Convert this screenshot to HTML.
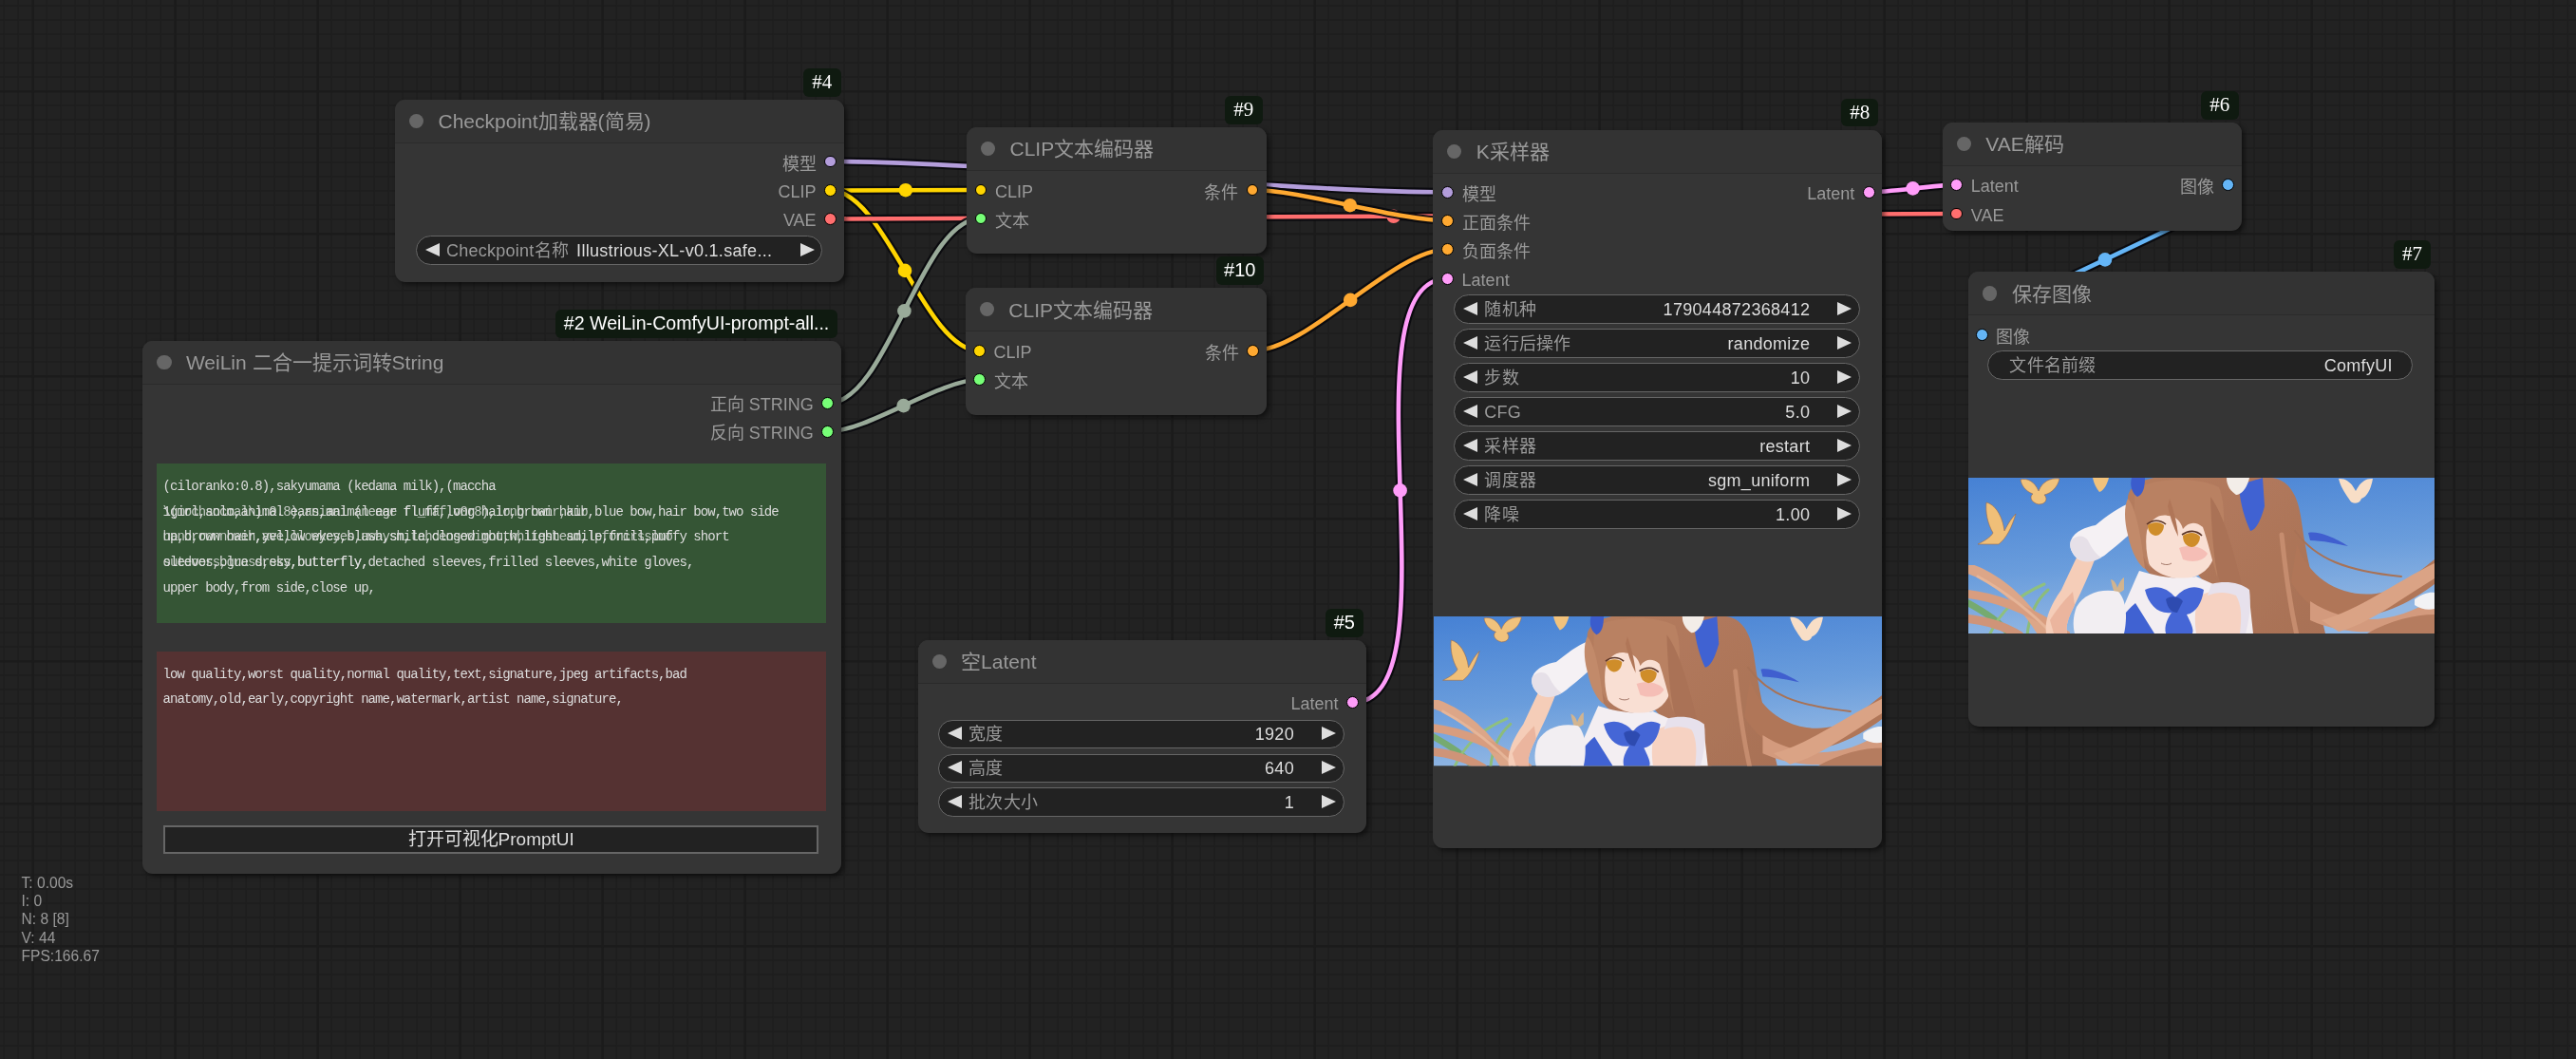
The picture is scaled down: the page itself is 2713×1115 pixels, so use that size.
<!DOCTYPE html>
<html lang="zh-CN"><head><meta charset="utf-8"><title>ComfyUI</title><style>
*{margin:0;padding:0;box-sizing:border-box}
html,body{width:2713px;height:1115px;overflow:hidden;background:#222;font-family:"Liberation Sans",sans-serif;-webkit-font-smoothing:antialiased}
.bg,.links{position:absolute;left:0;top:0}
#ui{position:absolute;left:0;top:0;width:2713px;height:1115px;will-change:transform}
.node{position:absolute;background:#353535;border-radius:11px;box-shadow:3px 3px 5px rgba(0,0,0,0.5)}
.node::before{content:"";position:absolute;left:0;top:0;right:0;height:45px;background:#333;border-radius:11px 11px 0 0}
.tdiv{position:absolute;left:0;right:0;top:44.5px;height:1.5px;background:#2b2b2b}
.tdot{position:absolute;left:15px;top:15px;width:15.2px;height:15.2px;border-radius:50%;background:#666}
.title{position:absolute;left:45.5px;top:0.4px;height:45px;line-height:45px;font-size:21px;color:#999;white-space:nowrap}
.slot{position:absolute;width:12.8px;height:12.8px;border-radius:50%;border:1.5px solid #000}
.slabel{position:absolute;height:30px;line-height:30px;font-size:18px;color:#999;white-space:nowrap}
.wg{position:absolute;background:#222;border:1.6px solid #666;border-radius:16px}
.arl{position:absolute;left:8.5px;top:6.8px;width:0;height:0;border-top:7.5px solid transparent;border-bottom:7.5px solid transparent;border-right:15px solid #ddd}
.arr{position:absolute;right:7.5px;top:6.8px;width:0;height:0;border-top:7.5px solid transparent;border-bottom:7.5px solid transparent;border-left:15px solid #ddd}
.wl{position:absolute;top:1.5px;line-height:27.3px;font-size:18px;color:#999;white-space:nowrap;letter-spacing:0.25px}
.wv{position:absolute;top:1.5px;line-height:27.3px;font-size:18px;color:#ddd;white-space:nowrap;letter-spacing:0.3px;margin-right:-0.3px}
.badge{position:absolute;will-change:transform;background:#0f1a10;border-radius:6px;color:#fff;font-size:20px;line-height:28.2px;text-align:center;white-space:nowrap}
.badge.long{font-size:19.6px;line-height:28.5px}
.badge.num{font-family:"Liberation Serif",serif;font-size:21px;line-height:28.5px}
.ta{position:absolute;overflow:hidden}
.tl{position:absolute;left:6.5px;height:26px;line-height:26px;font-family:"Liberation Mono",monospace;font-size:14px;letter-spacing:-0.95px;color:#ddd;white-space:pre}
.btn{position:absolute;background:#222;border:2px solid #666;color:#ddd;font-size:19px;line-height:26px;text-align:center}
.img{position:absolute}
.stats{position:absolute;left:22.5px;top:919.5px;font-size:15.6px;line-height:19.35px;color:#999}
</style></head>
<body>
<svg width="0" height="0" style="position:absolute"><defs><symbol id="art" viewBox="0 0 491 164">
<linearGradient id="sky" x1="0" y1="0" x2="0.25" y2="1"><stop offset="0" stop-color="#4681d4"/><stop offset="0.6" stop-color="#6a9ddc"/><stop offset="1" stop-color="#92b7e3"/></linearGradient>
<linearGradient id="hairg" x1="0" y1="0" x2="1" y2="1"><stop offset="0" stop-color="#b57c5e"/><stop offset="1" stop-color="#a87156"/></linearGradient>
<filter id="bl" x="-2%" y="-2%" width="104%" height="104%"><feGaussianBlur stdDeviation="0.6"/></filter>
<rect width="491" height="164" fill="url(#sky)"/>
<g filter="url(#bl)" fill="none" stroke-linecap="round">
<!-- grass left -->
<path d="M0 132 C18 142 34 152 44 166" stroke="#76aa70" stroke-width="7"/>
<path d="M22 166 C34 140 52 124 80 112" stroke="#8fc07e" stroke-width="3"/>
<path d="M62 166 C64 146 70 130 84 118" stroke="#8cbc7a" stroke-width="3"/>
<!-- hair strands lower left -->
<path d="M-4 94 C28 104 58 128 80 166" stroke="#dca688" stroke-width="11"/>
<path d="M-4 122 C34 126 70 142 104 166" stroke="#d89d7f" stroke-width="9"/>
<path d="M-4 148 C18 150 38 156 54 166" stroke="#cf9478" stroke-width="9"/>
<path d="M10 104 C40 120 70 145 90 166" stroke="#e6b598" stroke-width="3"/>
</g>
<g filter="url(#bl)">
<!-- butterflies left -->
<path d="M55 2 C62 0 70 4 74 14 C78 4 86 0 96 1 C94 10 88 16 80 18 C84 22 82 28 74 28 C66 26 64 20 68 17 C60 14 56 8 55 2Z" fill="#f1c27c" stroke="#9a6a4a" stroke-width="0.6"/>
<path d="M19 26 C28 28 36 40 38 56 C42 48 46 42 50 38 C46 52 40 64 32 70 L10 70 C18 66 24 62 26 58 C20 48 18 36 19 26Z" fill="#f0bf78" stroke="#9a6a4a" stroke-width="0.6"/>
<path d="M131 0 L148 0 C146 8 142 14 138 15 C134 10 132 5 131 0Z" fill="#f1c27c"/>
<path d="M150 107 C154 108 156 112 157 116 C159 110 162 106 164 105 L164 118 C160 121 156 123 154 122 C152 116 151 112 150 107Z" fill="#e8b87c" opacity="0.8"/>
<!-- arm -->
<path d="M82 164 C80 150 86 135 98 118 C104 105 110 92 116 80 L134 84 C128 100 120 118 112 134 C106 146 102 156 104 164Z" fill="#f5cdb8"/>
<path d="M86 150 C92 140 100 130 110 120 L112 134 C106 146 102 156 104 164 L90 164Z" fill="#ebb59e"/>
<!-- glove -->
<path d="M108 66 C112 56 124 52 134 50 C146 40 160 30 172 26 L182 48 C170 60 158 70 148 78 C140 86 128 90 116 86 C108 80 106 72 108 66Z" fill="#f5f1f4"/>
<path d="M108 66 C114 60 122 60 126 66 C130 74 134 80 140 84 C130 90 120 90 114 84 C108 78 106 72 108 66Z" fill="#e6e0e8"/>
<!-- hair main mass behind head -->
<path d="M168 20 C170 6 190 -4 230 -2 L320 0 C336 2 346 16 350 40 C354 70 360 100 368 130 L376 164 L270 164 C262 130 250 110 240 100 C220 110 200 110 190 100 C178 88 170 60 168 40Z" fill="url(#hairg)"/>
</g>
<g filter="url(#bl)" fill="none" stroke-linecap="round">
<!-- ponytail sweeping strands -->
<path d="M344 56 C366 86 398 98 456 104" stroke="#a87256" stroke-width="2"/>
<path d="M330 60 C334 100 338 130 346 166" stroke="#c58c6e" stroke-width="5"/>
</g>
<g filter="url(#bl)">
<path d="M346 70 C360 110 400 130 440 120 C460 112 478 96 491 86 L491 112 C470 128 440 146 400 148 C370 146 352 130 340 110Z" fill="#b07658"/>
<path d="M360 130 C400 156 450 156 491 126 L491 146 C450 166 400 168 360 150Z" fill="#d39a7d"/>
<path d="M372 150 C410 140 450 110 491 90 L491 106 C455 128 420 155 390 162Z" fill="#daa385"/>
<path d="M420 164 C445 150 470 144 491 144 L491 164Z" fill="#b57b5e"/>
<path d="M470 128 C478 122 486 120 491 121 L491 138 C484 140 476 138 470 134Z" fill="#f2f2f4"/>
<!-- face -->
<path d="M183 50 C190 40 205 36 238 40 C252 46 259 58 259 80 C257 94 246 104 228 107 C208 106 193 98 187 86 C182 74 181 62 183 50Z" fill="#f9dfd3"/>
<path d="M222 74 C232 70 246 72 252 80 C248 88 236 90 226 86Z" fill="#f4b8b0" opacity="0.85"/>
<!-- bangs over face -->
<path d="M176 12 C196 0 240 -2 264 10 C272 30 270 60 262 104 C256 84 252 66 247 52 C240 46 232 46 226 54 C224 46 218 40 210 40 C200 38 192 44 188 56 C186 70 188 84 192 96 C180 80 172 50 176 12Z" fill="#b98162"/>
<path d="M212 22 C216 34 220 48 221 62 C216 52 212 40 210 30Z" fill="#b07658"/>
<!-- eyes -->
<path d="M189 50 C194 46 202 46 206 50 C206 56 202 61 197 61 C192 60 189 56 189 50Z" fill="#cf8d2c"/>
<path d="M188 49 C194 44 202 44 208 49" stroke="#5a3426" stroke-width="1.6" fill="none"/>
<path d="M226 61 C232 57 240 57 244 62 C244 68 240 73 235 73 C229 72 226 68 226 61Z" fill="#cf8d2c"/>
<path d="M225 60 C232 55 240 55 246 61" stroke="#5a3426" stroke-width="1.6" fill="none"/>
<path d="M203 90 C207 92 211 92 214 90" stroke="#8a5a4a" stroke-width="0.8" fill="none"/>
<!-- hair left of face -->
<path d="M168 22 C176 30 182 60 186 96 C180 92 172 80 168 60 C164 45 164 30 168 22Z" fill="#c28a6a"/>
<!-- right lock over shoulder -->
<path d="M255 20 C270 40 280 80 290 120 C296 140 300 155 304 164 L284 164 C276 140 268 120 262 100 C258 80 256 50 255 20Z" fill="#aa7256"/>
<!-- ribbons -->
<path d="M285 8 C295 4 305 2 310 0 L312 30 C308 45 303 55 297 56 C292 45 286 28 285 8Z" fill="#3f62d2"/>
<path d="M172 0 L186 0 C186 10 184 18 178 20 C172 16 170 8 172 0Z" fill="#3a5ccc"/>
<path d="M272 0 L296 0 C294 10 288 18 282 18 C276 14 272 8 272 0Z" fill="#f3ede8"/>
<path d="M358 58 C368 56 384 62 400 72 C390 70 372 66 360 66Z" fill="#3f5fcf"/>
<path d="M390 1 C398 0 404 6 408 14 C412 6 418 0 426 1 C424 12 420 20 414 22 C412 28 404 28 402 24 C398 18 392 10 390 1Z" fill="#f8dec6"/>
<!-- dress / neck -->
<path d="M180 98 C200 104 220 108 240 104 L258 112 C270 112 285 112 295 118 L300 164 L150 164 C160 145 170 120 180 98Z" fill="#f3eef2"/>
<path d="M150 164 C158 152 166 140 176 132 L196 164Z" fill="#3f62d2"/>
<!-- shoulder -->
<path d="M244 124 C256 118 272 116 284 122 C290 136 290 150 288 164 L240 164 C238 150 238 136 244 124Z" fill="#f6d2c2"/>
<path d="M256 112 C270 108 286 110 296 118 C298 132 296 150 292 164 L286 164 C288 148 288 134 282 124 C272 120 262 120 252 124Z" fill="#e7e1ec"/>
<!-- bow -->
<path d="M186 118 C198 112 210 116 218 126 C226 116 238 112 248 118 C246 132 240 142 230 144 C234 152 238 160 236 164 L208 164 C206 156 210 148 214 142 C200 144 190 134 186 118Z" fill="#4566d6"/>
<path d="M208 128 C212 124 222 124 226 130 L220 142 C214 142 210 138 208 128Z" fill="#2f4bb0"/>
<!-- puff sleeve -->
<path d="M114 136 C122 122 140 116 158 120 C166 128 168 146 164 164 L112 164 C110 156 110 146 114 136Z" fill="#f2eef2"/>
</g>
</symbol>
</defs></svg>
<svg class="bg" width="2713" height="1115" viewBox="0 0 2713 1115"><rect width="100%" height="100%" fill="#222"/><path d="M4.1 0V1115M19.1 0V1115M34.1 0V1115M49.1 0V1115M64.1 0V1115M79.1 0V1115M94.1 0V1115M109.1 0V1115M124.1 0V1115M139.1 0V1115M154.1 0V1115M169.1 0V1115M184.1 0V1115M199.1 0V1115M214.1 0V1115M229.1 0V1115M244.1 0V1115M259.1 0V1115M274.1 0V1115M289.1 0V1115M304.1 0V1115M319.1 0V1115M334.1 0V1115M349.1 0V1115M364.1 0V1115M379.1 0V1115M394.1 0V1115M409.1 0V1115M424.1 0V1115M439.1 0V1115M454.1 0V1115M469.1 0V1115M484.1 0V1115M499.1 0V1115M514.1 0V1115M529.1 0V1115M544.1 0V1115M559.1 0V1115M574.1 0V1115M589.1 0V1115M604.1 0V1115M619.1 0V1115M634.1 0V1115M649.1 0V1115M664.1 0V1115M679.1 0V1115M694.1 0V1115M709.1 0V1115M724.1 0V1115M739.1 0V1115M754.1 0V1115M769.1 0V1115M784.1 0V1115M799.1 0V1115M814.1 0V1115M829.1 0V1115M844.1 0V1115M859.1 0V1115M874.1 0V1115M889.1 0V1115M904.1 0V1115M919.1 0V1115M934.1 0V1115M949.1 0V1115M964.1 0V1115M979.1 0V1115M994.1 0V1115M1009.1 0V1115M1024.1 0V1115M1039.1 0V1115M1054.1 0V1115M1069.1 0V1115M1084.1 0V1115M1099.1 0V1115M1114.1 0V1115M1129.1 0V1115M1144.1 0V1115M1159.1 0V1115M1174.1 0V1115M1189.1 0V1115M1204.1 0V1115M1219.1 0V1115M1234.1 0V1115M1249.1 0V1115M1264.1 0V1115M1279.1 0V1115M1294.1 0V1115M1309.1 0V1115M1324.1 0V1115M1339.1 0V1115M1354.1 0V1115M1369.1 0V1115M1384.1 0V1115M1399.1 0V1115M1414.1 0V1115M1429.1 0V1115M1444.1 0V1115M1459.1 0V1115M1474.1 0V1115M1489.1 0V1115M1504.1 0V1115M1519.1 0V1115M1534.1 0V1115M1549.1 0V1115M1564.1 0V1115M1579.1 0V1115M1594.1 0V1115M1609.1 0V1115M1624.1 0V1115M1639.1 0V1115M1654.1 0V1115M1669.1 0V1115M1684.1 0V1115M1699.1 0V1115M1714.1 0V1115M1729.1 0V1115M1744.1 0V1115M1759.1 0V1115M1774.1 0V1115M1789.1 0V1115M1804.1 0V1115M1819.1 0V1115M1834.1 0V1115M1849.1 0V1115M1864.1 0V1115M1879.1 0V1115M1894.1 0V1115M1909.1 0V1115M1924.1 0V1115M1939.1 0V1115M1954.1 0V1115M1969.1 0V1115M1984.1 0V1115M1999.1 0V1115M2014.1 0V1115M2029.1 0V1115M2044.1 0V1115M2059.1 0V1115M2074.1 0V1115M2089.1 0V1115M2104.1 0V1115M2119.1 0V1115M2134.1 0V1115M2149.1 0V1115M2164.1 0V1115M2179.1 0V1115M2194.1 0V1115M2209.1 0V1115M2224.1 0V1115M2239.1 0V1115M2254.1 0V1115M2269.1 0V1115M2284.1 0V1115M2299.1 0V1115M2314.1 0V1115M2329.1 0V1115M2344.1 0V1115M2359.1 0V1115M2374.1 0V1115M2389.1 0V1115M2404.1 0V1115M2419.1 0V1115M2434.1 0V1115M2449.1 0V1115M2464.1 0V1115M2479.1 0V1115M2494.1 0V1115M2509.1 0V1115M2524.1 0V1115M2539.1 0V1115M2554.1 0V1115M2569.1 0V1115M2584.1 0V1115M2599.1 0V1115M2614.1 0V1115M2629.1 0V1115M2644.1 0V1115M2659.1 0V1115M2674.1 0V1115M2689.1 0V1115M2704.1 0V1115M0 6.0H2713M0 21.0H2713M0 36.0H2713M0 51.0H2713M0 66.0H2713M0 81.0H2713M0 96.0H2713M0 111.0H2713M0 126.0H2713M0 141.0H2713M0 156.0H2713M0 171.0H2713M0 186.0H2713M0 201.0H2713M0 216.0H2713M0 231.0H2713M0 246.0H2713M0 261.0H2713M0 276.0H2713M0 291.0H2713M0 306.0H2713M0 321.0H2713M0 336.0H2713M0 351.0H2713M0 366.0H2713M0 381.0H2713M0 396.0H2713M0 411.0H2713M0 426.0H2713M0 441.0H2713M0 456.0H2713M0 471.0H2713M0 486.0H2713M0 501.0H2713M0 516.0H2713M0 531.0H2713M0 546.0H2713M0 561.0H2713M0 576.0H2713M0 591.0H2713M0 606.0H2713M0 621.0H2713M0 636.0H2713M0 651.0H2713M0 666.0H2713M0 681.0H2713M0 696.0H2713M0 711.0H2713M0 726.0H2713M0 741.0H2713M0 756.0H2713M0 771.0H2713M0 786.0H2713M0 801.0H2713M0 816.0H2713M0 831.0H2713M0 846.0H2713M0 861.0H2713M0 876.0H2713M0 891.0H2713M0 906.0H2713M0 921.0H2713M0 936.0H2713M0 951.0H2713M0 966.0H2713M0 981.0H2713M0 996.0H2713M0 1011.0H2713M0 1026.0H2713M0 1041.0H2713M0 1056.0H2713M0 1071.0H2713M0 1086.0H2713M0 1101.0H2713" stroke="#1e1e1e" stroke-width="1.6" fill="none"/><path d="M34.8 0V1115M184.8 0V1115M334.8 0V1115M484.8 0V1115M634.8 0V1115M784.8 0V1115M934.8 0V1115M1084.8 0V1115M1234.8 0V1115M1384.8 0V1115M1534.8 0V1115M1684.8 0V1115M1834.8 0V1115M1984.8 0V1115M2134.8 0V1115M2284.8 0V1115M2434.8 0V1115M2584.8 0V1115M0 96.3H2713M0 246.3H2713M0 396.3H2713M0 546.3H2713M0 696.3H2713M0 846.3H2713M0 996.3H2713" stroke="#1b1b1b" stroke-width="2.2" fill="none"/></svg>
<div id="ui"><svg class="links" width="2713" height="1115" viewBox="0 0 2713 1115"><path d="M874.6 170.0C1037.3 170.0 1361.9 202.3 1524.6 202.3" stroke="#0a0a0e" stroke-opacity="0.92" stroke-width="9" fill="none"/><path d="M874.6 170.0C1037.3 170.0 1361.9 202.3 1524.6 202.3" stroke="#b39ddb" stroke-width="4.6" fill="none"/><circle cx="1199.6" cy="186.2" r="7.3" fill="#b39ddb"/><path d="M874.6 200.5C914.2 200.5 993.4 200.0 1033.0 200.0" stroke="#0a0a0e" stroke-opacity="0.92" stroke-width="9" fill="none"/><path d="M874.6 200.5C914.2 200.5 993.4 200.0 1033.0 200.0" stroke="#ffd500" stroke-width="4.6" fill="none"/><circle cx="953.8" cy="200.2" r="7.3" fill="#ffd500"/><path d="M874.6 200.5C932.2 200.5 973.9 369.3 1031.5 369.3" stroke="#0a0a0e" stroke-opacity="0.92" stroke-width="9" fill="none"/><path d="M874.6 200.5C932.2 200.5 973.9 369.3 1031.5 369.3" stroke="#ffd500" stroke-width="4.6" fill="none"/><circle cx="953.0" cy="284.9" r="7.3" fill="#ffd500"/><path d="M874.6 230.5C1171.2 230.5 1764.2 225.0 2060.8 225.0" stroke="#0a0a0e" stroke-opacity="0.92" stroke-width="9" fill="none"/><path d="M874.6 230.5C1171.2 230.5 1764.2 225.0 2060.8 225.0" stroke="#ff6e6e" stroke-width="4.6" fill="none"/><circle cx="1467.7" cy="227.8" r="7.3" fill="#ff6e6e"/><path d="M871.7 424.7C934.9 424.7 969.8 230.0 1033.0 230.0" stroke="#0a0a0e" stroke-opacity="0.92" stroke-width="9" fill="none"/><path d="M871.7 424.7C934.9 424.7 969.8 230.0 1033.0 230.0" stroke="#9a9" stroke-width="4.6" fill="none"/><circle cx="952.4" cy="327.4" r="7.3" fill="#9a9"/><path d="M871.7 454.3C913.9 454.3 989.3 399.8 1031.5 399.8" stroke="#0a0a0e" stroke-opacity="0.92" stroke-width="9" fill="none"/><path d="M871.7 454.3C913.9 454.3 989.3 399.8 1031.5 399.8" stroke="#9a9" stroke-width="4.6" fill="none"/><circle cx="951.6" cy="427.1" r="7.3" fill="#9a9"/><path d="M1319.0 200.0C1371.0 200.0 1472.6 232.4 1524.6 232.4" stroke="#0a0a0e" stroke-opacity="0.92" stroke-width="9" fill="none"/><path d="M1319.0 200.0C1371.0 200.0 1472.6 232.4 1524.6 232.4" stroke="#ffa931" stroke-width="4.6" fill="none"/><circle cx="1421.8" cy="216.2" r="7.3" fill="#ffa931"/><path d="M1319.8 369.3C1377.5 369.3 1466.9 262.5 1524.6 262.5" stroke="#0a0a0e" stroke-opacity="0.92" stroke-width="9" fill="none"/><path d="M1319.8 369.3C1377.5 369.3 1466.9 262.5 1524.6 262.5" stroke="#ffa931" stroke-width="4.6" fill="none"/><circle cx="1422.2" cy="315.9" r="7.3" fill="#ffa931"/><path d="M1424.6 739.6C1539.0 739.6 1410.2 293.2 1524.6 293.2" stroke="#0a0a0e" stroke-opacity="0.92" stroke-width="9" fill="none"/><path d="M1424.6 739.6C1539.0 739.6 1410.2 293.2 1524.6 293.2" stroke="#ff9cf9" stroke-width="4.6" fill="none"/><circle cx="1474.6" cy="516.4" r="7.3" fill="#ff9cf9"/><path d="M1968.3 202.3C1991.5 202.3 2037.6 194.6 2060.8 194.6" stroke="#0a0a0e" stroke-opacity="0.92" stroke-width="9" fill="none"/><path d="M1968.3 202.3C1991.5 202.3 2037.6 194.6 2060.8 194.6" stroke="#ff9cf9" stroke-width="4.6" fill="none"/><circle cx="2014.6" cy="198.4" r="7.3" fill="#ff9cf9"/><path d="M2346.5 194.6C2422.3 194.6 2011.6 352.2 2087.4 352.2" stroke="#0a0a0e" stroke-opacity="0.92" stroke-width="9" fill="none"/><path d="M2346.5 194.6C2422.3 194.6 2011.6 352.2 2087.4 352.2" stroke="#64b5f6" stroke-width="4.6" fill="none"/><circle cx="2217.0" cy="273.4" r="7.3" fill="#64b5f6"/></svg>
<div class="node" style="left:416px;top:105px;width:473px;height:191.5px"><div class="tdot"></div><div class="title">Checkpoint加载器(简易)</div><div class="tdiv"></div></div><div class="slot" style="left:868.2px;top:163.6px;background:#b39ddb"></div><div class="slabel r" style="right:1853.4px;top:157.5px">模型</div><div class="slot" style="left:868.2px;top:194.1px;background:#ffd500"></div><div class="slabel r" style="right:1853.4px;top:187.0px">CLIP</div><div class="slot" style="left:868.2px;top:224.1px;background:#ff6e6e"></div><div class="slabel r" style="right:1853.4px;top:217.0px">VAE</div><div class="wg" style="left:438px;top:248px;width:428px;height:30.5px"><div class="arl"></div><div class="arr"></div><div class="wl" style="left:31px">Checkpoint名称</div><div class="wv" style="right:52px">Illustrious-XL-v0.1.safe...</div></div><div class="badge num" style="left:846px;top:72.3px;width:39.5px;height:29.5px">#4</div><div class="node" style="left:1018px;top:134px;width:315.5px;height:133px"><div class="tdot"></div><div class="title">CLIP文本编码器</div><div class="tdiv"></div></div><div class="slot" style="left:1026.6px;top:193.6px;background:#ffd500"></div><div class="slabel" style="left:1048px;top:186.5px">CLIP</div><div class="slot" style="left:1026.6px;top:223.6px;background:#7f7"></div><div class="slabel" style="left:1048px;top:217.5px">文本</div><div class="slot" style="left:1312.6px;top:193.6px;background:#ffa931"></div><div class="slabel r" style="right:1409px;top:187.5px">条件</div><div class="badge num" style="left:1290.3px;top:101px;width:39.700000000000045px;height:29.5px">#9</div><div class="node" style="left:1016.8px;top:303.2px;width:317.20000000000005px;height:133.8px"><div class="tdot"></div><div class="title">CLIP文本编码器</div><div class="tdiv"></div></div><div class="slot" style="left:1025.1px;top:362.90000000000003px;background:#ffd500"></div><div class="slabel" style="left:1046.5px;top:355.8px">CLIP</div><div class="slot" style="left:1025.1px;top:393.40000000000003px;background:#7f7"></div><div class="slabel" style="left:1046.5px;top:387.3px">文本</div><div class="slot" style="left:1313.3999999999999px;top:362.90000000000003px;background:#ffa931"></div><div class="slabel r" style="right:1408.2px;top:356.8px">条件</div><div class="badge" style="left:1281.4px;top:270.3px;width:49.59999999999991px;height:30.0px">#10</div><div class="node" style="left:150.4px;top:359px;width:735.6px;height:561px"><div class="tdot"></div><div class="title">WeiLin 二合一提示词转String</div><div class="tdiv"></div></div><div class="slot" style="left:865.3000000000001px;top:418.3px;background:#7f7"></div><div class="slabel r" style="right:1856.3px;top:411.2px">正向 STRING</div><div class="slot" style="left:865.3000000000001px;top:447.90000000000003px;background:#7f7"></div><div class="slabel r" style="right:1856.3px;top:440.8px">反向 STRING</div><div class="badge long" style="left:584.8px;top:326px;width:297.20000000000005px;height:29.69999999999999px">#2 WeiLin-ComfyUI-prompt-all...</div><div class="ta" style="left:165px;top:487.6px;width:705px;height:168.19999999999993px;background:#355535"><div class="tl" style="top:11.199999999999989px;opacity:1">(ciloranko:0.8),sakyumama (kedama milk),(maccha</div><div class="tl" style="top:37.94999999999993px;opacity:1">1girl,solo,animal ears,animal ear fluff,long hair,brown hair,blue bow,hair bow,two side</div><div class="tl" style="top:37.94999999999993px;opacity:0.85">\(mochancmal\):0.8),animal (neage fl_maf,v0r8),long hair,kub</div><div class="tl" style="top:64.69999999999993px;opacity:1">up,brown hair,yellow eyes,blush,smile,closed mouth,light smile,frill,puffy short</div><div class="tl" style="top:64.69999999999993px;opacity:0.85">hand,rownoweh,ave,llowkeyes,awaysh,tahdengowight,whiteshead,lpfoncrsslmo</div><div class="tl" style="top:91.44999999999993px;opacity:1">sleeves,blue dress,butterfly,detached sleeves,frilled sleeves,white gloves,</div><div class="tl" style="top:91.44999999999993px;opacity:0.85">outdoors,grass,sky,butterfly,</div><div class="tl" style="top:118.19999999999993px;opacity:1">upper body,from side,close up,</div></div><div class="ta" style="left:165px;top:686.3px;width:705px;height:167.5px;background:#553232"><div class="tl" style="top:10.400000000000091px;opacity:1">low quality,worst quality,normal quality,text,signature,jpeg artifacts,bad</div><div class="tl" style="top:37.15000000000009px;opacity:1">anatomy,old,early,copyright name,watermark,artist name,signature,</div></div><div class="btn" style="left:172px;top:868.7px;width:690.4px;height:29.9px">打开可视化PromptUI</div><div class="node" style="left:966.6px;top:674px;width:472.1px;height:203.29999999999995px"><div class="tdot"></div><div class="title">空Latent</div><div class="tdiv"></div></div><div class="slot" style="left:1418.1999999999998px;top:733.2px;background:#ff9cf9"></div><div class="slabel r" style="right:1303.4px;top:726.1px">Latent</div><div class="wg" style="left:988.2px;top:757.5px;width:427.5px;height:30.5px"><div class="arl"></div><div class="arr"></div><div class="wl" style="left:31px">宽度</div><div class="wv" style="right:52px">1920</div></div><div class="wg" style="left:988.2px;top:793.6px;width:427.5px;height:30.5px"><div class="arl"></div><div class="arr"></div><div class="wl" style="left:31px">高度</div><div class="wv" style="right:52px">640</div></div><div class="wg" style="left:988.2px;top:829.3px;width:427.5px;height:30.5px"><div class="arl"></div><div class="arr"></div><div class="wl" style="left:31px">批次大小</div><div class="wv" style="right:52px">1</div></div><div class="badge" style="left:1396px;top:641px;width:39.59999999999991px;height:29.799999999999955px">#5</div><div class="node" style="left:1509.3px;top:137px;width:472.70000000000005px;height:756.2px"><div class="tdot"></div><div class="title">K采样器</div><div class="tdiv"></div></div><div class="slot" style="left:1518.1999999999998px;top:195.9px;background:#b39ddb"></div><div class="slabel" style="left:1539.6px;top:189.8px">模型</div><div class="slot" style="left:1518.1999999999998px;top:226.0px;background:#ffa931"></div><div class="slabel" style="left:1539.6px;top:219.9px">正面条件</div><div class="slot" style="left:1518.1999999999998px;top:256.1px;background:#ffa931"></div><div class="slabel" style="left:1539.6px;top:250.0px">负面条件</div><div class="slot" style="left:1518.1999999999998px;top:286.8px;background:#ff9cf9"></div><div class="slabel" style="left:1539.6px;top:279.7px">Latent</div><div class="slot" style="left:1961.8999999999999px;top:195.9px;background:#ff9cf9"></div><div class="slabel r" style="right:759.7px;top:188.8px">Latent</div><div class="wg" style="left:1531.3px;top:310.0px;width:427.70000000000005px;height:30.5px"><div class="arl"></div><div class="arr"></div><div class="wl" style="left:31px">随机种</div><div class="wv" style="right:52px">179044872368412</div></div><div class="wg" style="left:1531.3px;top:346.0px;width:427.70000000000005px;height:30.5px"><div class="arl"></div><div class="arr"></div><div class="wl" style="left:31px">运行后操作</div><div class="wv" style="right:52px">randomize</div></div><div class="wg" style="left:1531.3px;top:382.0px;width:427.70000000000005px;height:30.5px"><div class="arl"></div><div class="arr"></div><div class="wl" style="left:31px">步数</div><div class="wv" style="right:52px">10</div></div><div class="wg" style="left:1531.3px;top:418.0px;width:427.70000000000005px;height:30.5px"><div class="arl"></div><div class="arr"></div><div class="wl" style="left:31px">CFG</div><div class="wv" style="right:52px">5.0</div></div><div class="wg" style="left:1531.3px;top:454.0px;width:427.70000000000005px;height:30.5px"><div class="arl"></div><div class="arr"></div><div class="wl" style="left:31px">采样器</div><div class="wv" style="right:52px">restart</div></div><div class="wg" style="left:1531.3px;top:490.0px;width:427.70000000000005px;height:30.5px"><div class="arl"></div><div class="arr"></div><div class="wl" style="left:31px">调度器</div><div class="wv" style="right:52px">sgm_uniform</div></div><div class="wg" style="left:1531.3px;top:526.0px;width:427.70000000000005px;height:30.5px"><div class="arl"></div><div class="arr"></div><div class="wl" style="left:31px">降噪</div><div class="wv" style="right:52px">1.00</div></div><div class="badge num" style="left:1939px;top:104.2px;width:39.40000000000009px;height:29.39999999999999px">#8</div><svg class="img" style="left:1509.5px;top:649px" width="472.5" height="157.6" viewBox="0 0 491 164" preserveAspectRatio="none"><use href="#art"/></svg><div class="node" style="left:2045.7px;top:129px;width:315.29999999999995px;height:113.80000000000001px"><div class="tdot"></div><div class="title">VAE解码</div><div class="tdiv"></div></div><div class="slot" style="left:2054.4px;top:188.2px;background:#ff9cf9"></div><div class="slabel" style="left:2075.8px;top:181.1px">Latent</div><div class="slot" style="left:2054.4px;top:218.6px;background:#ff6e6e"></div><div class="slabel" style="left:2075.8px;top:211.5px">VAE</div><div class="slot" style="left:2340.1px;top:188.2px;background:#64b5f6"></div><div class="slabel r" style="right:381.5px;top:182.1px">图像</div><div class="badge num" style="left:2318.2px;top:96px;width:39.5px;height:29.700000000000003px">#6</div><div class="node" style="left:2073px;top:286.4px;width:491px;height:478.20000000000005px"><div class="tdot"></div><div class="title">保存图像</div><div class="tdiv"></div></div><div class="slot" style="left:2081.0px;top:345.8px;background:#64b5f6"></div><div class="slabel" style="left:2102.4px;top:339.7px">图像</div><div class="wg" style="left:2093.3px;top:369px;width:447.6999999999998px;height:30.5px"><div class="wl" style="left:22px">文件名前缀</div><div class="wv" style="right:20.5px">ComfyUI</div></div><div class="badge num" style="left:2520.8px;top:253px;width:39.19999999999982px;height:30px">#7</div><svg class="img" style="left:2073px;top:503.1px" width="491" height="164" viewBox="0 0 491 164" preserveAspectRatio="none"><use href="#art"/></svg>
<div class="stats">T: 0.00s<br>I: 0<br>N: 8 [8]<br>V: 44<br>FPS:166.67</div></div>
</body></html>
